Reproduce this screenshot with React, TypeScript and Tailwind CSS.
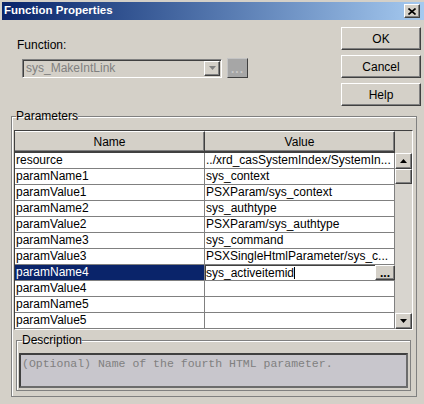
import React from 'react'

const rows: [string, string][] = [
  ['resource', '../xrd_casSystemIndex/SystemIn...'],
  ['paramName1', 'sys_context'],
  ['paramValue1', 'PSXParam/sys_context'],
  ['paramName2', 'sys_authtype'],
  ['paramValue2', 'PSXParam/sys_authtype'],
  ['paramName3', 'sys_command'],
  ['paramValue3', 'PSXSingleHtmlParameter/sys_c...'],
  ['paramName4', 'sys_activeitemid'],
  ['paramValue4', ''],
  ['paramName5', ''],
  ['paramValue5', ''],
]

const raised =
  'border border-t-white border-l-white border-r-[#404040] border-b-[#404040] shadow-[inset_-1px_-1px_0_#808080] bg-[#d4d0c8]'

function Arrow({ up = false, color = '#000' }: { up?: boolean; color?: string }) {
  return (
    <svg width="7" height="4" viewBox="0 0 7 4">
      <path d={up ? 'M0 4h7L3.5 0z' : 'M0 0h7L3.5 4z'} fill={color} />
    </svg>
  )
}

function PushButton({ label }: { label: string }) {
  return (
    <button className={`${raised} h-[23px] w-[80px] text-[12px] leading-[14px] text-black`}>
      {label}
    </button>
  )
}

export default function App() {
  return (
    <div className="flex h-[404px] w-[424px] flex-col overflow-hidden bg-[#d4d0c8] pl-[2px] pt-[2px] font-['Liberation_Sans',Arial,sans-serif] text-[12px] text-black">
      {/* title bar */}
      <div className="flex h-[18px] items-center justify-between bg-linear-to-r from-[#0a246a] to-[#a6caf0] pl-[2px] pr-[4px]">
        <span className="text-[11.5px] font-bold text-white">Function Properties</span>
        <div className={`${raised} flex h-[14px] w-[16px] items-center justify-center`}>
          <svg width="8" height="7" viewBox="0 0 8 7">
            <path d="M0.5 0.5L7.5 6.5M7.5 0.5L0.5 6.5" stroke="#000" strokeWidth="1.6" />
          </svg>
        </div>
      </div>

      {/* function picker + dialog buttons */}
      <div className="flex h-[90px]">
        <div className="flex flex-1 flex-col pl-[15px]">
          <div className="mt-[18px] h-[14px] leading-[14px]">Function:</div>
          <div className="mt-[6px] ml-[5px] flex items-center">
            <div className="flex h-[19px] w-[200px] items-center border border-t-[#808080] border-l-[#808080] border-r-white border-b-white shadow-[inset_1px_1px_0_#404040] pl-[3px] pr-[1px]">
              <span className="flex-1 text-[#808080]">sys_MakeIntLink</span>
              <div className={`${raised} flex h-[15px] w-[16px] items-center justify-center`}>
                <Arrow color="#808080" />
              </div>
            </div>
            <div className="ml-[5px] flex h-[20px] w-[21px] items-end justify-center border border-t-[#c4c4c4] border-l-[#c4c4c4] border-r-[#404040] border-b-[#404040] bg-[#a6a6a6] pb-[3px] text-[12px] font-bold leading-[10px] tracking-[1px] text-[#c8c8c8]">
              ...
            </div>
          </div>
        </div>
        <div className="mr-[3px] mt-[7px] flex w-[80px] flex-col gap-[5px]">
          <PushButton label="OK" />
          <PushButton label="Cancel" />
          <PushButton label="Help" />
        </div>
      </div>

      {/* parameters group */}
      <fieldset className="ml-[9px] w-[406px] border border-[#808080] pl-[2px] pb-[5px] shadow-[inset_1px_1px_0_#ffffff]">
        <legend className="ml-[2px] px-0 text-[12px] leading-[12px]">Parameters</legend>

        <div className="mt-[8px] flex w-[399px] border border-t-[#404040] border-l-[#404040] border-r-white border-b-white">
          <div className="flex w-[380px] flex-col">
            <div className="flex h-[22px]">
              {['Name', 'Value'].map((h) => (
                <div
                  key={h}
                  className="flex w-[190px] items-center justify-center border-t border-t-white border-r border-r-[#404040] border-b-2 border-b-[#404040] shadow-[inset_-1px_-1px_0_#808080] bg-[#d4d0c8]"
                >
                  {h}
                </div>
              ))}
            </div>
            <div className="h-[176px] overflow-hidden bg-white">
              {rows.map(([name, value]) => {
                const sel = name === 'paramName4'
                return (
                  <div key={name} className="flex h-[16px] leading-[15px]">
                    <div
                      className={`w-[190px] whitespace-nowrap border-r border-b border-[#808080] pl-[1px] ${
                        sel ? 'bg-[#0a246a] text-white' : ''
                      }`}
                    >
                      {name}
                    </div>
                    {sel ? (
                      <div className="flex w-[190px] border-b border-[#808080]">
                        <div className="flex flex-1 items-center border-t border-l border-[#404040] bg-white leading-[14px]">
                          <span>{value}</span>
                          <span className="inline-block h-[12px] w-[1px] bg-black" />
                        </div>
                        <div
                          className={`${raised} flex w-[20px] items-end justify-center pb-[2px] text-[12px] font-bold leading-[8px]`}
                        >
                          ...
                        </div>
                      </div>
                    ) : (
                      <div className="w-[190px] overflow-hidden whitespace-nowrap border-r border-b border-[#808080] pl-[1px]">
                        {value}
                      </div>
                    )}
                  </div>
                )
              })}
            </div>
          </div>

          {/* scrollbar */}
          <div className="flex w-[17px] flex-col">
            <div className="h-[22px] bg-[#d4d0c8]" />
            <div className="flex h-[176px] flex-col bg-[#d8d5cf]">
              <div className={`${raised} flex h-[16px] items-center justify-center`}>
                <Arrow up />
              </div>
              <div className={`${raised} h-[15px]`} />
              <div className="flex-1" />
              <div className={`${raised} flex h-[16px] items-center justify-center`}>
                <Arrow />
              </div>
            </div>
          </div>
        </div>

        {/* description group */}
        <fieldset className="mt-[4px] ml-[2px] w-[395px] border border-[#808080] pl-[2px] pb-[2px] shadow-[inset_1px_1px_0_#ffffff]">
          <legend className="ml-[3px] px-0 text-[12px] leading-[12px]">Description</legend>
          <div className="mt-[7px] h-[35px] w-[389px] border-2 border-t-[#404040] border-l-[#404040] border-r-[#6b6b6b] border-b-[#6b6b6b] bg-[#c8c6cc] pl-[1px] pt-[2px] font-['Liberation_Mono','Courier_New',monospace] text-[11.5px] leading-[14px] text-[#808080]">
            (Optional) Name of the fourth HTML parameter.
          </div>
        </fieldset>
      </fieldset>
    </div>
  )
}
